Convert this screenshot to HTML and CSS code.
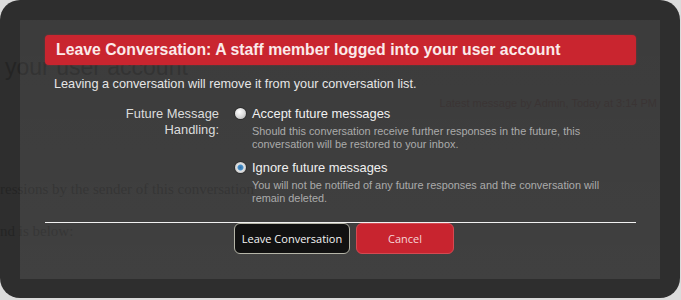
FILE: index.html
```html
<!DOCTYPE html>
<html lang="en">
<head>
  <meta charset="UTF-8" />
  <title>Leave Conversation</title>
  <link rel="stylesheet" href="styles.css">
</head>
<body>

  <!-- page behind the overlay -->
  <div class="page">
    <div class="page-title">your user account</div>
    <div class="page-meta">Latest message by Admin, Today at 3:14 PM</div>
    <div class="page-text">ressions by the sender of this conversation</div>
    <div class="page-text second">nd is below:</div>
  </div>

  <div class="overlay">
    <div class="dialog">
      <div class="dialog-title">Leave Conversation: A staff member logged into your user account</div>
      <p class="intro">Leaving a conversation will remove it from your conversation list.</p>

      <div class="form-row">
        <div class="form-label">Future Message<br>Handling:</div>
        <div class="options">
          <div class="option">
            <span class="radio"></span>
            <div>
              <div class="option-name">Accept future messages</div>
              <div class="option-hint">Should this conversation receive further responses in the future, this conversation will be restored to your inbox.</div>
            </div>
          </div>
          <div class="option">
            <span class="radio checked"></span>
            <div>
              <div class="option-name">Ignore future messages</div>
              <div class="option-hint">You will not be notified of any future responses and the conversation will remain deleted.</div>
            </div>
          </div>
        </div>
      </div>

      <div class="buttons">
        <button class="btn btn-leave">Leave Conversation</button>
        <button class="btn btn-cancel">Cancel</button>
      </div>
    </div>
  </div>

</body>
</html>
```

FILE: styles.css
```css
body {
  margin: 0;
  background-color: #dcdcdc;
  font-family: "Liberation Sans", Arial, sans-serif;
  overflow: hidden;
}

/* underlying page, only seen through the overlay */
.page {
  height: 300px;
  color: #000;
}

.page-title {
  padding: 55px 0 0 5px;
  font-size: 23px;
  line-height: 24px;
}

.page-meta {
  margin-top: 18px;
  padding-right: 24px;
  text-align: right;
  font-size: 11px;
  color: #a00;
}

.page-text {
  margin-top: 71px;
  font-family: "Liberation Serif", serif;
  font-size: 15px;
  line-height: 18px;
}

.page-text.second {
  margin-top: 24px;
}

/* modal */
.overlay {
  position: absolute;
  top: 0;
  left: 0;
  width: 640px;
  height: 259px;
  padding: 20px 20px 19px 20px;
  border-radius: 20px;
  background-color: rgba(38, 38, 38, 0.955);
}

.dialog {
  height: 259px;
  padding: 15px 24px 0 25px;
  box-sizing: border-box;
  background: linear-gradient(rgba(255, 255, 255, 0.065), rgba(255, 255, 255, 0.085));
}

.dialog-title {
  height: 30px;
  line-height: 30px;
  padding-left: 11px;
  border-radius: 4px;
  background-color: #c9252f;
  box-shadow: 0 0 2px rgba(200, 40, 50, 0.6);
  color: #fbeaea;
  font-size: 15.8px;
  font-weight: bold;
  white-space: nowrap;
}

.intro {
  margin: 11px 0 0 9px;
  font-size: 12.7px;
  line-height: 16px;
  color: #e6e6e6;
}

.form-row {
  display: flex;
  margin-top: 14px;
  padding-bottom: 17px;
  border-bottom: 1px solid #f2f2f2;
}

.form-label {
  width: 174px;
  text-align: right;
  font-size: 12.9px;
  line-height: 16px;
  color: #dcdcdc;
}

.options {
  margin-left: 16px;
}

.option {
  display: flex;
  gap: 6px;
  margin-bottom: 9px;
}

.option:last-child {
  margin-bottom: 0;
}

.radio {
  flex: none;
  width: 11px;
  height: 11px;
  margin-top: 2px;
  border-radius: 50%;
  background: radial-gradient(circle at 40% 35%, #fff, #d8d8d8 55%, #a8a8a8);
  box-shadow: 0 0 0 1px rgba(0, 0, 0, 0.25);
}

.radio.checked {
  background: radial-gradient(circle, #2d6fa8 0, #4a90c8 2.5px, #e4e4e4 3.5px, #c8c8c8 5.5px);
}

.option-name {
  font-size: 12.9px;
  line-height: 16px;
  color: #f0f0f0;
}

.option-hint {
  width: 370px;
  margin-top: 3px;
  font-size: 10.9px;
  line-height: 13px;
  color: #ababab;
}

.buttons {
  display: flex;
  gap: 6px;
  padding-left: 189px;
}

.btn {
  height: 31px;
  padding: 0;
  border-radius: 6px;
  font-family: "Open Sans", "DejaVu Sans", sans-serif;
  font-size: 11px;
  white-space: nowrap;
}

.btn-leave {
  width: 116px;
  background-color: #111;
  border: 1px solid #b5b5a8;
  color: #f5f5f5;
}

.btn-cancel {
  width: 98px;
  background-color: #c8242f;
  border: 1px solid #d44a52;
  color: #f6d6d8;
}
```
